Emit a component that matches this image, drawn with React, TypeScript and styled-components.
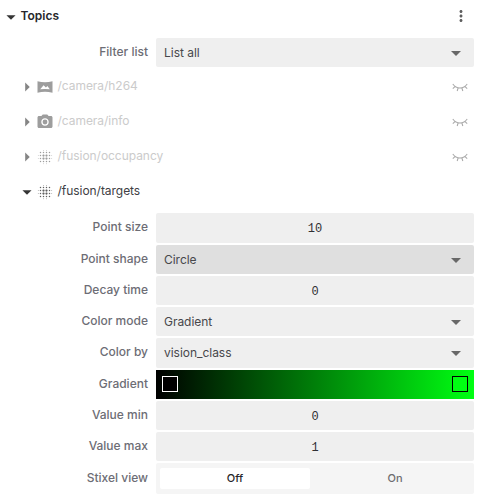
import React from "react";
import styled, { createGlobalStyle } from "styled-components";
import { MdArrowDropDown, MdArrowRight, MdBlurOn, MdMoreVert, MdPhotoCamera } from "react-icons/md";

const GlobalStyle = createGlobalStyle`
  * { box-sizing: border-box; }
  body { margin: 0; background: #fff; overflow: hidden; }
`;

const Panel = styled.main`
  width: 478px;
  height: 498px;
  overflow: hidden;
  background: #fff;
  color: #303034;
  font: 400 12px/16px Inter, sans-serif;
  letter-spacing: 0;
`;

const Header = styled.header`
  display: flex;
  align-items: center;
  height: 32px;
  padding: 0 8px 0 2.5px;

  h2 {
    flex: 1;
    margin: 0 0 0 2px;
    font-size: 12px;
    font-weight: 600;
    letter-spacing: 0;
    color: #27272b;
  }
`;

const Caret = styled.span<{ $muted?: boolean }>`
  display: flex;
  flex: none;
  align-items: center;
  justify-content: center;
  width: 16px;
  height: 16px;
  margin-top: 1px;
  color: ${(p) => (p.$muted ? "#858585" : "#353535")};

  svg { flex: none; }
`;

const IconButton = styled.button`
  display: flex;
  padding: 0;
  border: 0;
  background: none;
  color: #5f5f5f;
`;

const Fields = styled.section<{ $rows: string }>`
  display: grid;
  grid-template-columns: 148px 318px;
  grid-template-rows: ${(p) => p.$rows};
  gap: 2px 8px;
`;

const FilterFields = styled(Fields)`
  margin-top: 6px;
`;

const Label = styled.label`
  align-self: center;
  padding-bottom: 2px;
  text-align: right;
  font-weight: 500;
  color: #6d6d75;
`;

const Select = styled.div<{ $hovered?: boolean }>`
  display: flex;
  align-items: center;
  justify-content: space-between;
  padding: 0 6px 0 8px;
  border-radius: 2px;
  color: #47474b;
  letter-spacing: -0.03px;
  background: ${(p) => (p.$hovered ? "#dfdfdf" : "#efefef")};

  svg { color: #686868; }
`;

const NumberField = styled.div`
  display: flex;
  align-items: center;
  justify-content: center;
  padding-top: 2px;
  border-radius: 2px;
  background: #efefef;
  font-family: "Liberation Mono", monospace;
  color: #303034;
`;

const Gradient = styled.div`
  display: flex;
  align-items: center;
  justify-content: space-between;
  padding: 0 6px;
  background: linear-gradient(to right, #000, #00ff12);
`;

const Stop = styled.span<{ $fill: string; $line: string }>`
  width: 16px;
  height: 16px;
  margin-bottom: 1px;
  border: 1px solid ${(p) => p.$line};
  background: ${(p) => p.$fill};
`;

const Toggle = styled.div`
  display: grid;
  grid-template-columns: 1fr 1fr;
  gap: 10px;
  padding: 5px 4px;
  border-radius: 2px;
  background: #f5f5f5;
`;

const ToggleOption = styled.button<{ $active?: boolean }>`
  padding: 0 0 2px;
  border: 0;
  border-radius: 2px;
  background: ${(p) => (p.$active ? "#fff" : "transparent")};
  color: ${(p) => (p.$active ? "#27272b" : "#6d6d70")};
  font: 500 11px/16px Inter, sans-serif;
`;

const Tree = styled.section`
  margin: 2px 0 4px;
`;

const TopicRow = styled.div<{ $visible?: boolean }>`
  display: flex;
  align-items: center;
  height: 35px;
  padding: 0 10px 0 18.5px;
  color: ${(p) => (p.$visible ? "#404044" : "#cbcbcb")};
`;

const TopicIcon = styled.span<{ $visible?: boolean }>`
  display: flex;
  flex: none;
  width: 18px;
  height: 18px;
  margin-left: 1px;
  color: ${(p) => (p.$visible ? "#606060" : "#9d9d9d")};
`;

const TopicName = styled.span`
  flex: 1;
  margin-left: 4px;
  padding-bottom: 1px;
  letter-spacing: -0.04px;
`;

const PanoramaIcon = () => (
  <svg width="18" height="18" viewBox="0 0 18 18">
    <path
      d="M1.5 3.2Q9 5.3 16.5 3.2V14.8Q9 12.7 1.5 14.8Z M4.2 11.3Q9 10.7 13.8 11.3L11.4 8.1 9.9 9.6 7.6 7.3Z"
      fill="currentColor"
      fillRule="evenodd"
    />
  </svg>
);

const ClosedEyeIcon = () => (
  <svg width="16" height="16" viewBox="0 0 16 16" fill="none" stroke="#aaa" strokeWidth="1.1">
    <path d="M.8 5Q3.6 9 8 9T15.2 5M3.2 7.4.8 9.6M6.1 8.8 5.2 12M9.9 8.8 10.8 12M12.8 7.4 15.2 9.6" />
  </svg>
);

type TopicProps = { name: string; icon: React.ReactNode; visible?: boolean };

const Topic = ({ name, icon, visible }: TopicProps) => (
  <TopicRow $visible={visible}>
    <Caret $muted={!visible}>{visible ? <MdArrowDropDown size={22} /> : <MdArrowRight size={22} />}</Caret>
    <TopicIcon $visible={visible}>{icon}</TopicIcon>
    <TopicName>{name}</TopicName>
    {!visible && (
      <IconButton aria-label="Show topic">
        <ClosedEyeIcon />
      </IconButton>
    )}
  </TopicRow>
);

const SelectField = ({ label, value, hovered }: { label: string; value: string; hovered?: boolean }) => (
  <>
    <Label>{label}</Label>
    <Select $hovered={hovered}>
      {value}
      <MdArrowDropDown size={24} />
    </Select>
  </>
);

const NumericField = ({ label, value }: { label: string; value: number }) => (
  <>
    <Label>{label}</Label>
    <NumberField>{value}</NumberField>
  </>
);

export default function App() {
  return (
    <Panel>
      <GlobalStyle />
      <Header>
        <Caret><MdArrowDropDown size={22} /></Caret>
        <h2>Topics</h2>
        <IconButton aria-label="More"><MdMoreVert size={18} /></IconButton>
      </Header>
      <FilterFields $rows="29px">
        <SelectField label="Filter list" value="List all" />
      </FilterFields>
      <Tree>
        <Topic name="/camera/h264" icon={<PanoramaIcon />} />
        <Topic name="/camera/info" icon={<MdPhotoCamera size={18} />} />
        <Topic name="/fusion/occupancy" icon={<MdBlurOn size={18} />} />
        <Topic name="/fusion/targets" icon={<MdBlurOn size={18} />} visible />
      </Tree>
      <Fields $rows="30px 29px 29px 29px 30px 29px 29px 29px 31px">
        <NumericField label="Point size" value={10} />
        <SelectField label="Point shape" value="Circle" hovered />
        <NumericField label="Decay time" value={0} />
        <SelectField label="Color mode" value="Gradient" />
        <SelectField label="Color by" value="vision_class" />
        <Label>Gradient</Label>
        <Gradient>
          <Stop $fill="#000" $line="#fff" />
          <Stop $fill="#00ff12" $line="#000" />
        </Gradient>
        <NumericField label="Value min" value={0} />
        <NumericField label="Value max" value={1} />
        <Label>Stixel view</Label>
        <Toggle>
          <ToggleOption $active>Off</ToggleOption>
          <ToggleOption>On</ToggleOption>
        </Toggle>
      </Fields>
    </Panel>
  );
}
